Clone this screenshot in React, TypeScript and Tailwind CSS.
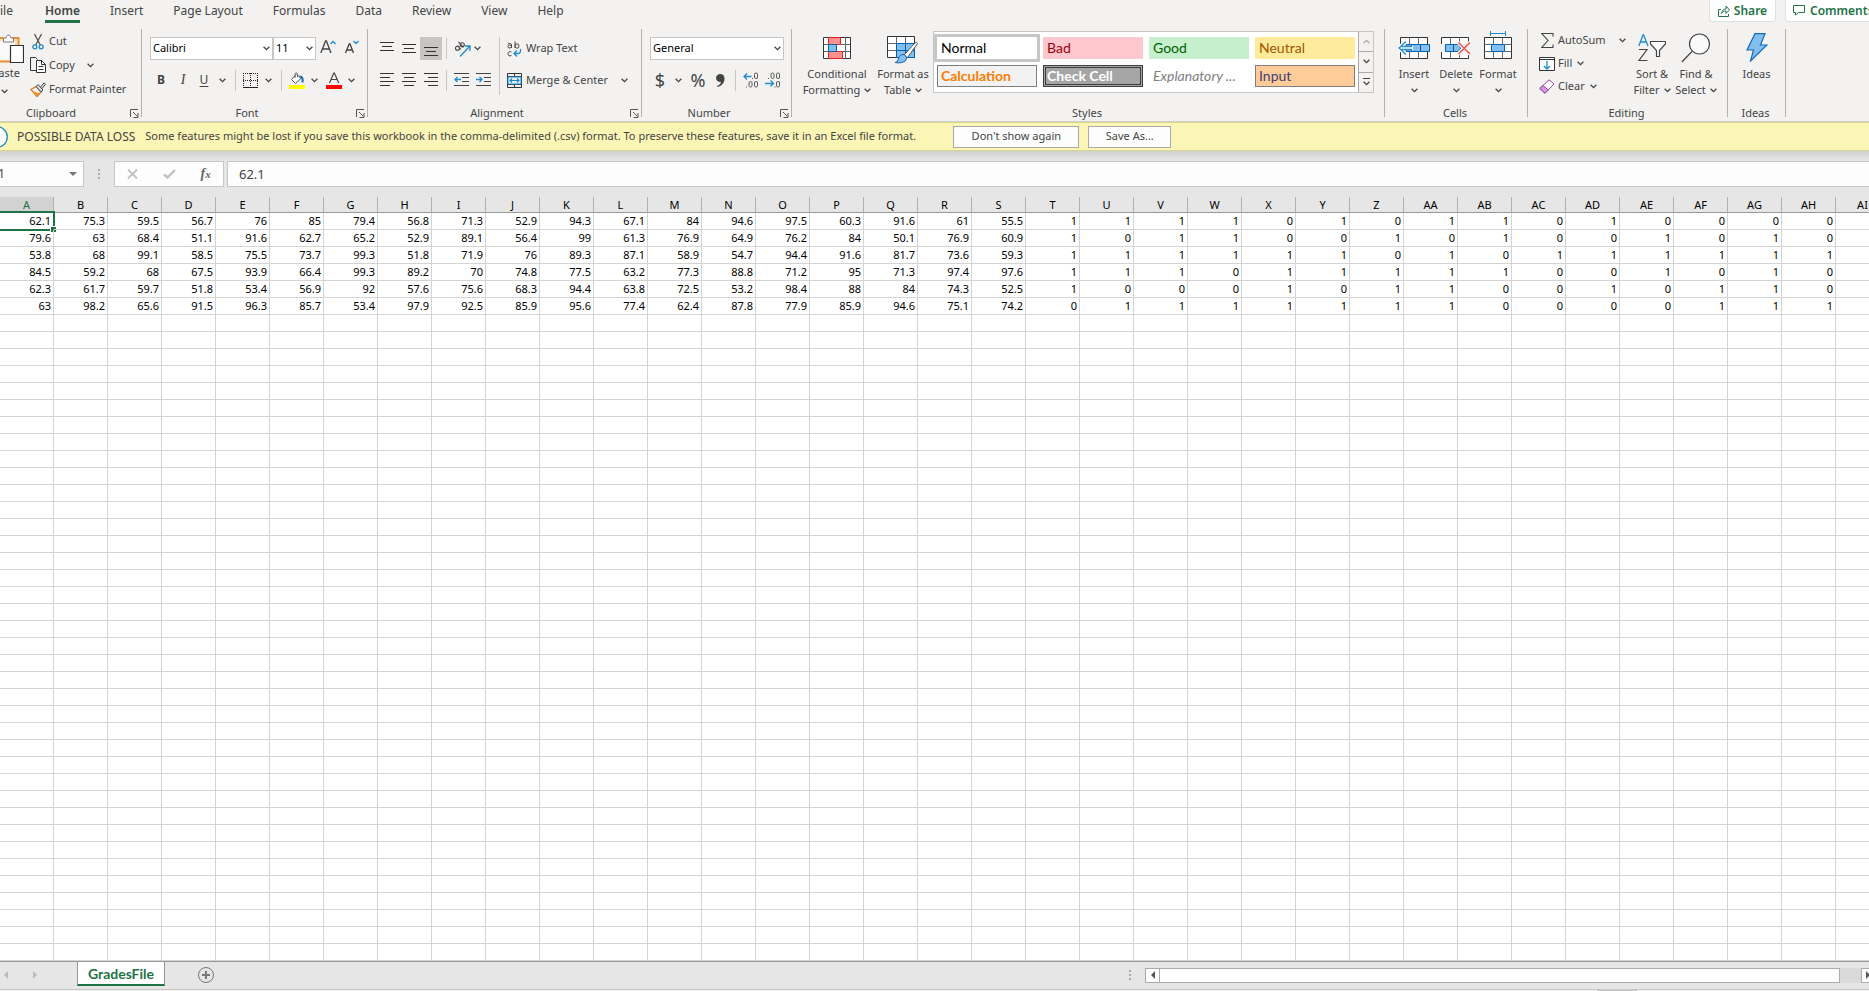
import { useState } from 'react';
import type { ReactNode } from 'react';
import clsx from 'clsx';

const GRADES: number[][] = [
  [62.1, 75.3, 59.5, 56.7, 76, 85, 79.4, 56.8, 71.3, 52.9, 94.3, 67.1, 84, 94.6, 97.5, 60.3, 91.6, 61, 55.5, 1, 1, 1, 1, 0, 1, 0, 1, 1, 0, 1, 0, 0, 0, 0],
  [79.6, 63, 68.4, 51.1, 91.6, 62.7, 65.2, 52.9, 89.1, 56.4, 99, 61.3, 76.9, 64.9, 76.2, 84, 50.1, 76.9, 60.9, 1, 0, 1, 1, 0, 0, 1, 0, 1, 0, 0, 1, 0, 1, 0],
  [53.8, 68, 99.1, 58.5, 75.5, 73.7, 99.3, 51.8, 71.9, 76, 89.3, 87.1, 58.9, 54.7, 94.4, 91.6, 81.7, 73.6, 59.3, 1, 1, 1, 1, 1, 1, 0, 1, 0, 1, 1, 1, 1, 1, 1],
  [84.5, 59.2, 68, 67.5, 93.9, 66.4, 99.3, 89.2, 70, 74.8, 77.5, 63.2, 77.3, 88.8, 71.2, 95, 71.3, 97.4, 97.6, 1, 1, 1, 0, 1, 1, 1, 1, 1, 0, 0, 1, 0, 1, 0],
  [62.3, 61.7, 59.7, 51.8, 53.4, 56.9, 92, 57.6, 75.6, 68.3, 94.4, 63.8, 72.5, 53.2, 98.4, 88, 84, 74.3, 52.5, 1, 0, 0, 0, 1, 0, 1, 1, 0, 0, 1, 0, 1, 1, 0],
  [63, 98.2, 65.6, 91.5, 96.3, 85.7, 53.4, 97.9, 92.5, 85.9, 95.6, 77.4, 62.4, 87.8, 77.9, 85.9, 94.6, 75.1, 74.2, 0, 1, 1, 1, 1, 1, 1, 1, 0, 0, 0, 0, 1, 1, 1],
];

const ROW_COUNT = 44;
const COLUMN_COUNT = 35;

const columnName = (index: number): string =>
  index < 26 ? String.fromCharCode(65 + index) : columnName(Math.floor(index / 26) - 1) + columnName(index % 26);

const COLUMNS = Array.from({ length: COLUMN_COUNT }, (_, i) => columnName(i));

const Chevron = ({ className }: { className?: string }) => (
  <svg width="7" height="5" viewBox="0 0 7 5" className={clsx('shrink-0', className)} fill="none" stroke="#444" strokeWidth="1.3">
    <path d="M.6.8 3.5 3.6 6.4.8" />
  </svg>
);

const Drop = ({ label, className }: { label: string; className?: string }) => (
  <button aria-label={label} className={clsx('flex h-[22px] items-center justify-center', className ?? 'w-4')}>
    <Chevron />
  </button>
);

const Divider = ({ className }: { className?: string }) => (
  <div className={clsx('w-px shrink-0 bg-[#c8c6c4]', className ?? 'h-[21px]')} />
);

const Group = ({ name, launcher, className, children }: { name: string; launcher?: boolean; className: string; children: ReactNode }) => (
  <section aria-label={name} className={clsx('flex h-[88px] shrink-0 border-r border-[#b3b0ad]', className)}>
    <div className="flex w-full flex-col">
      <div className="flex h-[76px] shrink-0 items-start">{children}</div>
      <div className="flex h-4 shrink-0 items-center pr-0.5">
        <span className="flex-1 text-center leading-4">{name}</span>
        {launcher && (
          <button aria-label={`${name} settings`} className="ml-1 shrink-0">
            <svg width="9" height="9" viewBox="0 0 9 9" fill="none" stroke="#555">
              <path d="M.5 8V.5H8M3 3l4.500 4.500M8 4v4.500H3.500" />
            </svg>
          </button>
        )}
      </div>
    </div>
  </section>
);

const BigButton = ({ icon, lines, className, inlineDrop }: { icon: ReactNode; lines: string[]; className: string; inlineDrop?: boolean }) => (
  <button className={clsx('flex shrink-0 flex-col items-center', className)}>
    <span className="flex h-[37px] items-center justify-center">{icon}</span>
    <span className="leading-4 whitespace-nowrap">{lines[0]}</span>
    {lines[1] !== undefined && (
      <span className="flex h-4 items-center gap-1 leading-4 whitespace-nowrap">
        {lines[1]}
        {inlineDrop ? <Chevron /> : null}
      </span>
    )}
  </button>
);

const AlignIcon = ({ lines }: { lines: [number, number, number][] }) => (
  <svg width="14" height="14" viewBox="0 0 14 14" stroke="#333" fill="none">
    {lines.map(([x1, x2, y], i) => (
      <path key={i} d={`M${x1} ${y}H${x2}`} />
    ))}
  </svg>
);

const V_ALIGN: { name: string; lines: [number, number, number][] }[] = [
  { name: 'Top Align', lines: [[0, 14, 0.5], [2, 12, 4.5], [0, 14, 8.5]] },
  { name: 'Middle Align', lines: [[0, 14, 2.5], [2, 12, 6.5], [0, 14, 10.5]] },
  { name: 'Bottom Align', lines: [[0, 14, 5.5], [2, 12, 9.5], [0, 14, 13.5]] },
];

const H_ALIGN: { name: string; lines: [number, number, number][] }[] = [
  { name: 'Align Left', lines: [[0, 14, 0.5], [0, 10, 4.5], [0, 14, 8.5], [0, 10, 12.5]] },
  { name: 'Center', lines: [[0, 14, 0.5], [2, 12, 4.5], [0, 14, 8.5], [2, 12, 12.5]] },
  { name: 'Align Right', lines: [[0, 14, 0.5], [4, 14, 4.5], [0, 14, 8.5], [4, 14, 12.5]] },
];

const IndentIcon = ({ out }: { out?: boolean }) => (
  <svg width="15" height="14" viewBox="0 0 15 14" fill="none">
    <path d="M0 .5h15M8 4.500h7M8 8.500h7M0 12.500h15" stroke="#444" />
    <path d={out ? 'M7 6.500H1M3.500 4 1 6.500 3.500 9' : 'M0 6.500h6M3.500 4 6 6.500 3.500 9'} stroke="#1e8bcd" strokeWidth="1.300" />
  </svg>
);

const DecimalIcon = ({ increase }: { increase?: boolean }) => (
  <svg width="16" height="16" viewBox="0 0 16 16" fill="none">
    <g stroke="#555">
      {increase ? (
        <>
          <rect x="11.500" y="1" width="3" height="5.500" rx="1.400" />
          <rect x="6" y="9.500" width="3" height="5.500" rx="1.400" />
          <rect x="11.500" y="9.500" width="3" height="5.500" rx="1.400" />
          <path d="M9 6.500h1M3 15h1" />
        </>
      ) : (
        <>
          <rect x="6" y="1" width="3" height="5.500" rx="1.400" />
          <rect x="11.500" y="1" width="3" height="5.500" rx="1.400" />
          <rect x="11.500" y="9.500" width="3" height="5.500" rx="1.400" />
          <path d="M3 6.500h1M9.500 15h1" />
        </>
      )}
    </g>
    <path d={increase ? 'M8.500 4.500H1M4 1.500l-3 3 3 3' : 'M0 11.500h8M5.500 8.500l3 3-3 3'} stroke="#1e8bcd" strokeWidth="1.300" />
  </svg>
);

const PasteIcon = () => (
  <svg width="28" height="32" viewBox="0 0 28 32" fill="none">
    <path d="M7 5H1.500v23.500H14M17 5h5.500v7" stroke="#e8912d" strokeWidth="2" />
    <path d="M3.500 7h17v5H14v14H3.500z" fill="#fafafa" />
    <path d="M3 7h5M16 7h4v5" stroke="#fbd38a" strokeWidth="1.500" />
    <path d="M7.500 9V5H10c.500-4 4.500-4 5 0h2.500v4z" fill="#fff" stroke="#777" />
    <path d="M14.500 12.500h13v17h-13z" fill="#fff" stroke="#333" strokeWidth="1.200" />
  </svg>
);

const CutIcon = () => (
  <svg width="12" height="17" viewBox="0 0 12 17" fill="none">
    <path d="M2.500 1 8.300 12M9.500 1 3.700 12" stroke="#555" strokeWidth="1.300" />
    <circle cx="2.800" cy="13.800" r="2" stroke="#1e8bcd" strokeWidth="1.300" />
    <circle cx="9.200" cy="13.800" r="2" stroke="#1e8bcd" strokeWidth="1.300" />
  </svg>
);

const CopyIcon = () => (
  <svg width="16" height="16" viewBox="0 0 16 16" fill="none" stroke="#333">
    <path d="M6 13.500H.5V.5h5l2 2" />
    <path d="M6.500 3.500h5l4 4v8h-9z" fill="#fff" />
    <path d="M11.500 3.500v4h4M8.500 9.500h5M8.500 12.500h5" />
  </svg>
);

const PainterIcon = () => (
  <svg width="16" height="15" viewBox="0 0 16 15" fill="none">
    <path d="M1 7.500 6 4.500l5 5.500-4 4.500z" fill="#fff" stroke="#d8730f" strokeWidth="1.300" />
    <path d="M1.500 8.500 9.500 11.500l-2.500 3z" fill="#e8912d" />
    <path d="m6 4.500 2-2 5 5.500-2 2zM10.500 5 14 .8l1.500 1.500L12 6.500" fill="#ddd" stroke="#444" />
  </svg>
);

const BordersIcon = () => (
  <svg width="15" height="15" viewBox="0 0 15 15" stroke="#222" fill="none">
    <path d="M0 .5h15M.5 0v14M14.500 0v14M7.500 0v14M0 7.500h15" strokeDasharray="1 1" />
    <path d="M0 14.500h15" />
  </svg>
);

const FillColorIcon = () => (
  <svg width="16" height="17" viewBox="0 0 16 17" fill="none">
    <path d="M7 2.500 2.500 7.500l4 4L12 6.500 8 2.500" fill="#fff" stroke="#555" />
    <path d="M6 6V2.500C6 .5 8.500.5 8.500 2.500V5" stroke="#555" />
    <path d="M10.500 4.500c3 0 3.500 2 3 6" stroke="#1b6db0" strokeWidth="2" />
    <path d="M0 13h16v4H0z" fill="#ffff00" />
  </svg>
);

const FontColorIcon = () => (
  <svg width="16" height="17" viewBox="0 0 16 17" fill="none">
    <path d="M3.500 11 7.800 1h.6l4.300 10M5 7.500h6.200" stroke="#444" strokeWidth="1.200" />
    <path d="M0 13h16v4H0z" fill="#f00" />
  </svg>
);

const OrientationIcon = () => (
  <svg width="17" height="16" viewBox="0 0 17 16" fill="none">
    <path d="M6 15.500 15.500 5.500M11 5h5v5" stroke="#1e8bcd" strokeWidth="1.300" />
    <g stroke="#444" strokeWidth="1.100">
      <circle cx="3.500" cy="7.200" r="2" />
      <path d="m3.500 4.500 3.500 4" />
      <circle cx="8.300" cy="3.800" r="2" />
      <path d="m4.500.8 4.800 5.500" />
    </g>
  </svg>
);

const WrapIcon = () => (
  <svg width="15" height="16" viewBox="0 0 15 16" fill="none">
    <g stroke="#444">
      <path d="M1 3c2-1 3.500-.5 3.500 1v3" />
      <ellipse cx="2.700" cy="5.500" rx="1.800" ry="1.500" />
      <path d="M8 .5V7" />
      <ellipse cx="10" cy="5" rx="2" ry="2.200" />
      <path d="M4.500 11c-2-1-3.500 0-3.500 1.800s1.500 2.700 3.500 1.700" />
    </g>
    <path d="M13.500 8v2c0 2-1 2.500-3 2.500h-3M10 9.500l-3 3 3 3" stroke="#1e8bcd" strokeWidth="1.300" />
  </svg>
);

const MergeIcon = () => (
  <svg width="15" height="15" viewBox="0 0 15 15" fill="none">
    <path d="M.5.5h14v14H.5zM.5 3.500h14M.5 11.500h14M7.500 0v3.500M7.500 11.500V15" stroke="#333" />
    <path d="M1 4h13v7H1z" fill="#e8f3fb" stroke="#1e8bcd" />
    <path d="M3 7.500h9M5 5.500l-2 2 2 2M10 5.500l2 2-2 2" stroke="#1e8bcd" strokeWidth="1.200" />
  </svg>
);

const TableGrid = () => (
  <>
    <path d="M.5.5h27v21H.5z" fill="#fff" stroke="#333" />
    <path d="M.5 7.500h27M.5 14.500h27M9.500.5v21M18.500.5v21" stroke="#666" />
  </>
);

const ConditionalIcon = () => (
  <svg width="28" height="22" viewBox="0 0 28 22">
    <path d="M.5.5h27v21H.5z" fill="#fff" stroke="#333" />
    <path d="M.5 7.500h27M.5 14.500h27M5.500.5v21M22.500.5v21" stroke="#666" />
    <path d="M5.500.5h12v7h-12zM5.500 14.500h14v7h-14z" fill="#ff9191" stroke="#e02020" />
    <path d="M5.500 7.500h8v7h-8z" fill="#83beec" stroke="#0063b1" />
  </svg>
);

const FormatTableIcon = () => (
  <svg width="32" height="28" viewBox="0 0 32 28" className="mt-1">
    <g>
      <TableGrid />
      <path d="M9.500 7.500h18v14h-18z" fill="#83beec" stroke="#0063b1" />
      <path d="M9.500 14.500h18M18.500 7.500v14" stroke="#0063b1" />
    </g>
    <path d="m17 19 11-12c1.500-1.500 3 0 2 1.500L20 22z" fill="#fff" stroke="#555" />
    <path d="M16 18.500c2 0 4 2 3.500 4-1 4-6 5-11.500 4 3-.5 2.500-2 3.500-4.500.8-2 2.500-3.500 4.500-3.500z" fill="#83beec" stroke="#0f5ea8" />
  </svg>
);

const InsertIcon = () => (
  <svg width="32" height="22" viewBox="0 0 32 22" fill="none">
    <path d="M2.500.5h27v21h-27z" fill="#fff" stroke="#333" />
    <path d="M11.500.5v21M20.500.5v21" stroke="#666" />
    <path d="M8 7.500h23.500v7H8z" fill="#83beec" stroke="#0063b1" />
    <path d="M13.500 7.500v7M22.500 7.500v7" stroke="#0063b1" />
    <path d="M15 11H1M8 4 1 11l7 7" stroke="#fff" strokeWidth="4" />
    <path d="M14 9.500H4M14 12.500H4M8 4.500 1 11l7 6.500" stroke="#1e8bcd" strokeWidth="1.300" />
  </svg>
);

const DeleteIcon = () => (
  <svg width="30" height="22" viewBox="0 0 30 22" fill="none">
    <path d="M.5 7V.5h27V7M.5 15v6.500h27V15" fill="#fff" stroke="#333" />
    <path d="M9.500.5v21M18.500.5v21" stroke="#666" />
    <path d="M4.500 7.500H17l3 3.500-3 3.500H4.500z" fill="#83beec" stroke="#0063b1" />
    <path d="M12.500 7.500v7" stroke="#0063b1" />
    <path d="M17.500 5.500 29 17M29 5.500 17.500 17" stroke="#f3f2f1" strokeWidth="4" />
    <path d="M17.500 5.500 29 17M29 5.500 17.500 17" stroke="#e8504c" strokeWidth="1.400" />
  </svg>
);

const FormatIcon = () => (
  <svg width="28" height="28" viewBox="0 0 28 28" fill="none" className="mb-[5px]">
    <path d="M6.500 2.500h15M6.500 0v5M21.500 0v5" stroke="#1e8bcd" />
    <g transform="translate(0 6)">
      <TableGrid />
      <path d="M7.500 7.500h13v7h-13z" fill="#83beec" stroke="#0063b1" />
    </g>
  </svg>
);

const SumIcon = () => (
  <svg width="13" height="15" viewBox="0 0 13 15" fill="none" stroke="#444" strokeWidth="1.100">
    <path d="M12 3.500v-3H.8L7 7.500.8 14.500H12v-3" />
  </svg>
);

const FillIcon = () => (
  <svg width="16" height="14" viewBox="0 0 16 14" fill="none">
    <path d="M.5.5h15v13H.5z" fill="#fff" stroke="#333" />
    <path d="M.5 2.500h15" stroke="#333" />
    <path d="M8 4v8M5 9l3 3 3-3" stroke="#1e8bcd" strokeWidth="1.300" />
  </svg>
);

const ClearIcon = () => (
  <svg width="16" height="15" viewBox="0 0 16 15" stroke="#9b3fa8">
    <path d="M10 .8 15 5 6 14.200.8 9.500z" fill="#fff" />
    <path d="M4 6.500 9.200 11 6 14.200.8 9.500z" fill="#d49bdc" />
  </svg>
);

const SortIcon = () => (
  <svg width="28" height="28" viewBox="0 0 28 28" fill="none">
    <path d="M.8 12 5 1h.6L10 12M2.500 8h5.800" stroke="#1e8bcd" strokeWidth="1.300" />
    <path d="M1 15.500h8L1 26.500h8.500" stroke="#444" strokeWidth="1.200" />
    <path d="M12.500 7.500h15v2.500l-6 6.500v6h-3v-6l-6-6.500z" fill="#fff" stroke="#444" strokeWidth="1.200" />
  </svg>
);

const FindIcon = () => (
  <svg width="30" height="30" viewBox="0 0 30 30" fill="none" stroke="#444" strokeWidth="1.200">
    <circle cx="18.500" cy="11" r="10" fill="#fafafa" />
    <path d="M11 18.500.8 29" />
  </svg>
);

const IdeasIcon = () => (
  <svg width="22" height="29" viewBox="0 0 22 29">
    <path d="M9 .7h10L14.500 12H21L4.500 28 7.500 17H1z" fill="#83beec" stroke="#0f6cbd" strokeWidth="1.200" />
  </svg>
);

const GrowShrinkIcon = ({ grow }: { grow?: boolean }) => (
  <svg width="16" height="14" viewBox="0 0 16 14" fill="none">
    <path d={grow ? 'M.8 13 5.600 1h.8L11 13M2.500 9h7' : 'M1.500 13 5.200 4h.8L9.500 13M2.800 10h5.500'} stroke="#444" strokeWidth="1.300" />
    <path d={grow ? 'M10.500 4 13 1.500 15.500 4' : 'M9.500 1 12 3.500 14.500 1'} stroke="#1e8bcd" strokeWidth="1.300" />
  </svg>
);

const TABS = ['File', 'Home', 'Insert', 'Page Layout', 'Formulas', 'Data', 'Review', 'View', 'Help'];

const Tabs = () => (
  <header className="flex h-[29px] items-start justify-between">
    <nav className="flex h-[23px] items-start gap-[30px] text-xs leading-[21px]">
      {TABS.map((name) => (
        <button
          key={name}
          className={clsx(
            'h-[23px] border-b-[3px]',
            name === 'File' && 'mr-0.5 flex w-[13px] justify-end overflow-hidden',
            name === 'Home' ? 'border-[#217346] font-semibold' : 'border-transparent',
          )}
        >
          {name}
        </button>
      ))}
    </nav>
    <div className="flex gap-[9px] text-xs font-semibold text-[#217346]">
      <button className="flex h-[22px] w-[67px] items-center justify-center gap-1 rounded-b-sm border border-t-0 border-[#e1dfdd] bg-white">
        <svg width="12" height="12" viewBox="0 0 12 12" fill="none" stroke="#217346">
          <path d="M3 4.500H.5v7h10V9M3.500 8.500C4 5.500 5.500 4 8 4V1l3.500 4L8 8.500V6C6 6 4.500 7 3.500 8.500z" />
        </svg>
        Share
      </button>
      <button className="flex h-[22px] w-[84px] items-center gap-[5px] overflow-hidden rounded-bl-sm border border-t-0 border-r-0 border-[#e1dfdd] bg-white pl-[7px]">
        <svg width="12" height="11" viewBox="0 0 12 11" fill="none" stroke="#217346" className="shrink-0">
          <path d="M.5.5h11v7h-6l-3 2.500V7.500h-2z" />
        </svg>
        Comments
      </button>
    </div>
  </header>
);

const ClipboardGroup = () => (
  <Group name="Clipboard" launcher className="-ml-6 w-[166px]">
    <button className="flex w-12 flex-col items-end pt-1">
      <PasteIcon />
      <span className="pr-1 leading-4">Paste</span>
      <Chevron className="mt-2 mr-4" />
    </button>
    <div className="flex flex-col pl-1.5">
      <button className="flex h-6 items-center gap-[3px]">
        <span className="flex w-4 justify-center"><CutIcon /></span>Cut
      </button>
      <div className="flex h-6 items-center gap-1.5">
        <button className="flex items-center gap-[3px]"><CopyIcon />Copy</button>
        <Drop label="Copy options" className="w-5" />
      </div>
      <button className="flex h-6 items-center gap-[3px] whitespace-nowrap"><PainterIcon />Format Painter</button>
    </div>
  </Group>
);

const Combo = ({ label, options, className }: { label: string; options: string[]; className: string }) => (
  <label className={clsx('relative flex h-[23px] items-center', className)}>
    <span className="sr-only">{label}</span>
    <select className="h-full w-full appearance-none border border-[#c8c6c4] bg-white pl-0.5 text-black">
      {options.map((option) => (
        <option key={option}>{option}</option>
      ))}
    </select>
    <Chevron className="pointer-events-none absolute right-[3px]" />
  </label>
);

const FontGroup = () => (
  <Group name="Font" launcher className="w-[226px]">
    <div className="flex flex-col pt-2 pl-2">
      <div className="flex h-[23px] items-center">
        <Combo label="Font" options={['Calibri', 'Arial']} className="w-[123px]" />
        <Combo label="Font size" options={['11', '12', '14']} className="w-[43px]" />
        <button aria-label="Increase Font Size" className="ml-1 pb-1"><GrowShrinkIcon grow /></button>
        <button aria-label="Decrease Font Size" className="ml-2 pb-1"><GrowShrinkIcon /></button>
      </div>
      <div className="flex h-10 items-center text-xs">
        <button className="w-[22px] font-bold">B</button>
        <button className="w-[22px] font-['Liberation_Serif',serif] text-sm italic">I</button>
        <button className="w-5 underline underline-offset-2">U</button>
        <Drop label="Underline options" />
        <Divider className="mx-[5px] h-[21px]" />
        <button aria-label="Borders" className="ml-0.5"><BordersIcon /></button>
        <Drop label="Border options" className="ml-0.5 w-4" />
        <Divider className="mx-[5px] h-[21px]" />
        <button aria-label="Fill Color" className="ml-0.5"><FillColorIcon /></button>
        <Drop label="Fill colors" className="w-[18px]" />
        <button aria-label="Font Color" className="ml-[3px]"><FontColorIcon /></button>
        <Drop label="Font colors" className="w-[18px]" />
      </div>
    </div>
  </Group>
);

const AlignmentGroup = () => (
  <Group name="Alignment" launcher className="w-[274px]">
    <div className="flex pt-2 pl-2">
      <div className="flex flex-col">
        <div className="flex h-[23px] items-center">
          {V_ALIGN.map(({ name, lines }) => (
            <button
              key={name}
              aria-label={name}
              className={clsx('flex h-[23px] w-[22px] items-center justify-center', name === 'Bottom Align' && 'bg-[#c8c6c4]')}
            >
              <AlignIcon lines={lines} />
            </button>
          ))}
          <Divider className="mx-1 h-[21px]" />
          <button aria-label="Orientation" className="ml-[3px]"><OrientationIcon /></button>
          <Drop label="Orientation options" className="w-3" />
        </div>
        <div className="flex h-10 items-center">
          {H_ALIGN.map(({ name, lines }) => (
            <button key={name} aria-label={name} className="flex w-[22px] justify-center">
              <AlignIcon lines={lines} />
            </button>
          ))}
          <Divider className="mx-1 h-[21px]" />
          <button aria-label="Decrease Indent" className="ml-[3px]"><IndentIcon out /></button>
          <button aria-label="Increase Indent" className="ml-[7px]"><IndentIcon /></button>
        </div>
      </div>
      <Divider className="ml-2 h-[58px]" />
      <div className="flex flex-col pl-[7px]">
        <button className="flex h-[23px] items-center gap-1"><WrapIcon />Wrap Text</button>
        <div className="flex h-10 items-center">
          <button className="flex items-center gap-1 whitespace-nowrap"><MergeIcon />Merge &amp; Center</button>
          <Drop label="Merge options" className="ml-2 w-4" />
        </div>
      </div>
    </div>
  </Group>
);

const NumberGroup = () => (
  <Group name="Number" launcher className="w-[150px]">
    <div className="flex flex-col pt-2 pl-2">
      <Combo label="Number format" options={['General', 'Number', 'Currency']} className="w-[134px]" />
      <div className="flex h-10 items-center text-lg text-[#444]">
        <button className="w-5">$</button>
        <Drop label="Currency options" />
        <button className="w-6">%</button>
        <button aria-label="Comma Style" className="flex w-5 justify-center">
          <svg width="9" height="13" viewBox="0 0 9 13" fill="#444">
            <path d="M4.300 0C7 0 8.500 2 8.500 4.800 8.500 8.500 6 12 1.500 13l-.5-1c2.500-1 3.800-2.500 4-4.300-2.500.8-5-1-5-3.700C0 1.700 1.800 0 4.300 0z" />
          </svg>
        </button>
        <Divider className="mx-[5px] h-[21px]" />
        <button aria-label="Increase Decimal" className="ml-0.5"><DecimalIcon increase /></button>
        <button aria-label="Decrease Decimal" className="ml-1.5"><DecimalIcon /></button>
      </div>
    </div>
  </Group>
);

const CELL_STYLES = [
  { name: 'Normal', className: 'px-1 bg-white text-black outline-3 outline-[#c6c6c6]' },
  { name: 'Bad', className: 'px-1 bg-[#ffc7ce] text-[#9c0006]' },
  { name: 'Good', className: 'px-1 bg-[#c6efce] text-[#006100]' },
  { name: 'Neutral', className: 'px-1 bg-[#ffeb9c] text-[#9c5700]' },
  { name: 'Calculation', className: 'px-[3px] border border-[#7f7f7f] bg-[#f2f2f2] font-bold text-[#fa7d00]' },
  { name: 'Check Cell', className: 'px-px border-3 border-double border-[#3f3f3f] bg-[#a5a5a5] font-bold text-white' },
  { name: 'Explanatory ...', className: 'px-1 text-[#7f7f7f] italic' },
  { name: 'Input', className: 'px-[3px] border border-[#7f7f7f] bg-[#ffcc99] text-[#3f3f76]' },
];

const StylesGroup = () => (
  <Group name="Styles" className="w-[593px]">
    <BigButton className="ml-3 w-[66px]" icon={<ConditionalIcon />} lines={['Conditional', 'Formatting']} inlineDrop />
    <BigButton className="w-[66px]" icon={<FormatTableIcon />} lines={['Format as', 'Table']} inlineDrop />
    <div className="mt-0.5 -ml-[3px] flex h-[62px] border border-[#c8c6c4] bg-white">
      <div className="grid grid-cols-4 gap-1.5 px-[3px] py-[5px]">
        {CELL_STYLES.map(({ name, className }) => (
          <button key={name} className={clsx('flex h-[22px] w-[100px] items-center text-left font-[Lato,sans-serif] text-sm leading-4 whitespace-nowrap', className)}>
            {name}
          </button>
        ))}
      </div>
      <div className="flex w-[15px] flex-col divide-y divide-[#aaa] border-l border-[#aaa] bg-[#f3f2f1]">
        <button aria-label="Previous styles" className="flex flex-1 items-center justify-center"><Chevron className="rotate-180 opacity-40" /></button>
        <button aria-label="Next styles" className="flex flex-1 items-center justify-center"><Chevron /></button>
        <button aria-label="More styles" className="flex flex-1 flex-col items-center justify-center gap-0.5">
          <span className="h-px w-[7px] bg-[#444]" />
          <Chevron />
        </button>
      </div>
    </div>
  </Group>
);

const CellsGroup = () => (
  <Group name="Cells" className="w-[143px]">
    {[
      { name: 'Insert', icon: <InsertIcon />, className: 'w-[42px] ml-2' },
      { name: 'Delete', icon: <DeleteIcon />, className: 'w-[42px]' },
      { name: 'Format', icon: <FormatIcon />, className: 'w-[42px]' },
    ].map(({ name, icon, className }) => (
      <BigButton key={name} className={className} icon={icon} lines={[name, '']} inlineDrop />
    ))}
  </Group>
);

const EditingGroup = () => (
  <Group name="Editing" className="w-[200px]">
    <div className="flex w-[102px] flex-col pl-[11px]">
      <div className="flex h-[23px] items-center justify-between">
        <button className="flex items-center gap-[3px]"><span className="flex w-4 justify-center"><SumIcon /></span>AutoSum</button>
        <Drop label="AutoSum options" />
      </div>
      <button className="flex h-[23px] items-center gap-[3px]"><FillIcon />Fill<Chevron className="ml-0.5" /></button>
      <button className="flex h-[23px] items-center gap-[3px]"><ClearIcon />Clear<Chevron className="ml-0.5" /></button>
    </div>
    <BigButton className="w-11" icon={<SortIcon />} lines={['Sort &', 'Filter']} inlineDrop />
    <BigButton className="w-11" icon={<FindIcon />} lines={['Find &', 'Select']} inlineDrop />
  </Group>
);

const Ribbon = () => (
  <div className="flex h-[93px] overflow-hidden border-b border-[#d2d0ce]">
    <ClipboardGroup />
    <FontGroup />
    <AlignmentGroup />
    <NumberGroup />
    <StylesGroup />
    <CellsGroup />
    <EditingGroup />
    <Group name="Ideas" className="w-[58px]">
      <BigButton className="w-[57px]" icon={<IdeasIcon />} lines={['Ideas']} />
    </Group>
  </div>
);

const MessageBar = () => (
  <div className="flex h-[29px] items-center border-y border-[#d8d68a] bg-[#fcf6b6] whitespace-nowrap">
    <span className="flex w-[17px] justify-start overflow-hidden">
      <svg width="8" height="22" viewBox="0 0 8 22" fill="#fff" stroke="#1e8bcd" strokeWidth="1.300">
        <circle cx="-3" cy="11" r="10.300" />
      </svg>
    </span>
    <span className="text-xs">POSSIBLE DATA LOSS</span>
    <span className="w-[818px] pl-2.5">
      Some features might be lost if you save this workbook in the comma-delimited (.csv) format. To preserve these features, save it in an Excel file format.
    </span>
    <button className="h-[22px] w-[126px] border border-[#ababab] bg-[#fdfdfd]">Don't show again</button>
    <button className="ml-[9px] h-[22px] w-[83px] border border-[#ababab] bg-[#fdfdfd]">Save As...</button>
  </div>
);

const Grip = () => (
  <span className="flex flex-col gap-0.5">
    <span className="size-0.5 bg-[#aaa]" />
    <span className="size-0.5 bg-[#aaa]" />
    <span className="size-0.5 bg-[#aaa]" />
  </span>
);

const FormulaBar = ({ value, onChange }: { value: string; onChange: (value: string) => void }) => (
  <div className="flex h-[46px] items-start bg-linear-to-b from-[#d0d0d0] to-[#e6e6e6] to-20% pt-[10px] text-xs">
    <div className="flex h-[26px] w-[84px] items-center justify-between border border-l-0 border-[#c6c6c6] bg-[#fdfdfd] pr-1.5">
      <span className="flex w-[5px] justify-end">A1</span>
      <button aria-label="Name Box">
        <svg width="8" height="4" viewBox="0 0 8 4" fill="#777"><path d="M0 0h8L4 4z" /></svg>
      </button>
    </div>
    <span className="flex h-[26px] w-[30px] items-center justify-center"><Grip /></span>
    <div className="flex h-[26px] w-[110px] items-center justify-around border border-[#c6c6c6] bg-[#fdfdfd]">
      <button aria-label="Cancel">
        <svg width="11" height="10" viewBox="0 0 11 10" stroke="#c0c0c0" strokeWidth="1.800"><path d="m1 .5 9 9M10 .5l-9 9" /></svg>
      </button>
      <button aria-label="Enter">
        <svg width="13" height="10" viewBox="0 0 13 10" fill="none" stroke="#c0c0c0" strokeWidth="2.400"><path d="M1 5.500 4.500 8.500 12 1" /></svg>
      </button>
      <button className="font-['Liberation_Serif',serif] text-sm leading-4 font-bold text-[#666] italic">
        f<span className="text-[11px]">x</span>
      </button>
    </div>
    <input
      aria-label="Formula bar"
      value={value}
      onChange={(e) => onChange(e.target.value)}
      className="ml-[3px] h-[26px] min-w-0 flex-1 border border-r-0 border-[#c6c6c6] bg-[#fdfdfd] pl-[11px] text-[13px]"
    />
  </div>
);

const Sheet = ({ active }: { active: string }) => (
  <main className="overflow-hidden bg-white">
    <table className="w-max table-fixed border-separate border-spacing-0 text-[11px] text-black">
      <thead>
        <tr className="h-4">
          {COLUMNS.map((name, i) => (
            <th
              key={name}
              scope="col"
              className={clsx(
                'h-4 w-[54px] max-w-[54px] min-w-[54px] border-r border-b border-r-[#b1b1b1] border-b-[#999] p-0 leading-[15px] font-normal',
                i === 0 ? 'bg-[#d2d2d2] text-[#217346]' : 'bg-[#e6e6e6]',
              )}
            >
              {name}
            </th>
          ))}
        </tr>
      </thead>
      <tbody>
        {Array.from({ length: ROW_COUNT }, (_, row) => (
          <tr key={row}>
            {COLUMNS.map((name, col) => {
              const selected = row === 0 && col === 0;
              return (
                <td key={name} className="relative h-[17px] border-r border-b border-[#d4d4d4] p-0 pr-0.5 text-right leading-4">
                  {selected ? active : GRADES[row]?.[col]}
                  {selected && (
                    <span className="absolute -top-0.5 -right-0.5 -bottom-0.5 left-0 border-2 border-l-0 border-[#217346]">
                      <span className="absolute -right-[3px] -bottom-[3px] size-1.5 border-t border-l border-white bg-[#217346]" />
                    </span>
                  )}
                </td>
              );
            })}
          </tr>
        ))}
      </tbody>
    </table>
  </main>
);

const SheetBar = () => (
  <footer className="flex h-[29px] shrink-0 items-start border-t border-b border-t-[#999] border-b-[#c6c6c6] bg-[#e6e6e6]">
    <div className="flex h-[26px] w-[77px] items-center gap-[25px] pl-1">
      <button aria-label="Previous sheet">
        <svg width="4" height="8" viewBox="0 0 4 8" fill="#bbb"><path d="M4 0v8L0 4z" /></svg>
      </button>
      <button aria-label="Next sheet">
        <svg width="4" height="8" viewBox="0 0 4 8" fill="#bbb"><path d="M0 0v8l4-4z" /></svg>
      </button>
    </div>
    <button className="h-6 w-[88px] border-x border-b-2 border-x-[#999] border-b-[#217346] bg-white font-[Lato,sans-serif] text-sm leading-6 font-bold text-[#217346]">
      GradesFile
    </button>
    <button aria-label="New sheet" className="ml-8 flex h-[26px] items-center">
      <svg width="18" height="18" viewBox="0 0 18 18" fill="none" stroke="#777">
        <circle cx="9" cy="9" r="7.500" />
        <path d="M5 9h8M9 5v8" strokeWidth="2" />
      </svg>
    </button>
    <div className="ml-auto flex h-[26px] w-[740px] items-center">
      <Grip />
      <div className="ml-[14px] flex h-[15px] flex-1 bg-[#dadada]">
        <button aria-label="Scroll left" className="flex w-[15px] items-center justify-center border border-[#ababab] bg-white">
          <svg width="4" height="8" viewBox="0 0 4 8" fill="#555"><path d="M4 0v8L0 4z" /></svg>
        </button>
        <div className="mr-[21px] flex-1 border border-l-0 border-[#ababab] bg-white" />
        <button aria-label="Scroll right" className="flex w-2 items-center justify-end border border-r-0 border-[#ababab] bg-white">
          <svg width="3" height="8" viewBox="0 0 3 8" fill="#555"><path d="M0 0v8l4-4z" /></svg>
        </button>
      </div>
    </div>
  </footer>
);

const App = () => {
  const [value, setValue] = useState('62.1');

  return (
    <div className="flex min-h-screen flex-col overflow-hidden bg-[#f3f2f1] font-['Noto_Sans',sans-serif] text-[11px] text-[#444]">
      <Tabs />
      <Ribbon />
      <MessageBar />
      <FormulaBar value={value} onChange={setValue} />
      <Sheet active={value} />
      <SheetBar />
      <div className="flex flex-1 justify-end pr-[232px]">
        <span className="min-h-px w-10 bg-[#c6c6c6]" />
      </div>
    </div>
  );
};

export default App;
